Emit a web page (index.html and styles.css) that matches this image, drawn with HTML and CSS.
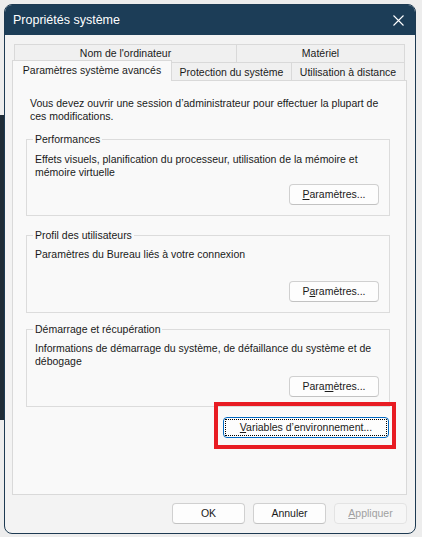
FILE: index.html
```html
<!DOCTYPE html>
<html lang="fr">
<head>
<meta charset="utf-8">
<title>Propriétés système</title>
<link rel="stylesheet" href="styles.css">
</head>
<body>
<div class="window">
  <div class="titlebar">
    <span class="title">Propriétés système</span>
    <svg class="close" width="11" height="11" viewBox="0 0 11 11"><path d="M0.5 0.5 L10.5 10.5 M10.5 0.5 L0.5 10.5" stroke="#ffffff" stroke-width="1.1" fill="none"/></svg>
  </div>
  <div class="body">
    <div class="tabs">
      <div class="tabrow back">
        <div class="tab t-nom">Nom de l'ordinateur</div>
        <div class="tab t-mat">Matériel</div>
      </div>
      <div class="tabrow front">
        <div class="tab selected">Paramètres système avancés</div>
        <div class="tab t-prot">Protection du système</div>
        <div class="tab t-util">Utilisation à distance</div>
      </div>
    </div>
    <div class="panel">
      <p class="intro">Vous devez ouvrir une session d’administrateur pour effectuer la plupart de<br>ces modifications.</p>
      <fieldset class="group g1">
        <legend>Performances</legend>
        <p class="desc">Effets visuels, planification du processeur, utilisation de la mémoire et<br>mémoire virtuelle</p>
        <div class="actions"><button class="btn"><u>P</u>aramètres...</button></div>
      </fieldset>
      <fieldset class="group g2">
        <legend>Profil des utilisateurs</legend>
        <p class="desc">Paramètres du Bureau liés à votre connexion</p>
        <div class="actions"><button class="btn">P<u>a</u>ramètres...</button></div>
      </fieldset>
      <fieldset class="group g3">
        <legend>Démarrage et récupération</legend>
        <p class="desc">Informations de démarrage du système, de défaillance du système et de<br>débogage</p>
        <div class="actions"><button class="btn">Para<u>m</u>ètres...</button></div>
      </fieldset>
      <div class="env-row">
        <div class="env-wrap">
          <button class="btn env"><span class="focus-ring"><u>V</u>ariables d’environnement...</span></button>
          <span class="highlight"></span>
        </div>
      </div>
    </div>
    <div class="footer">
      <button class="btn dlg">OK</button>
      <button class="btn dlg">Annuler</button>
      <button class="btn dlg disabled"><u>A</u>ppliquer</button>
    </div>
  </div>
</div>
</body>
</html>
```
FILE: styles.css
```css
html, body {
  margin: 0;
  padding: 0;
}
body {
  width: 422px;
  height: 537px;
  overflow: hidden;
  font-family: "Liberation Sans", Arial, sans-serif;
  font-size: 10.5px;
  line-height: 13px;
  color: #1a1a1a;
  background:
    linear-gradient(#1f2c37, #1f2c37) 0 115px / 4px 305px no-repeat,
    #ededed;
  padding: 4px 0 0 4px;
  box-sizing: border-box;
}
.window {
  width: 412px;
  height: 530px;
  box-sizing: border-box;
  border: 1px solid #1d3a52;
  border-radius: 8px;
  background: #f3f3f3;
  overflow: hidden;
  display: flex;
  flex-direction: column;
}
.titlebar {
  height: 30px;
  background: #1c3d57;
  color: #ffffff;
  display: flex;
  align-items: center;
  justify-content: space-between;
  padding: 0 11px 0 8px;
  font-size: 12.5px;
  flex: none;
}
.close {
  display: block;
}
.body {
  padding: 9px 8px 0 7px;
  display: flex;
  flex-direction: column;
}
.tabs {
  display: flex;
  flex-direction: column;
}
.tabrow {
  display: flex;
}
.tabrow.back {
  margin: 0 2px;
  height: 18px;
}
.tabrow.front {
  height: 18px;
  align-items: flex-start;
}
.tab {
  box-sizing: border-box;
  border: 1px solid #d9d9d9;
  border-bottom: none;
  background: #f0f0f0;
  text-align: center;
  height: 18px;
  line-height: 16px;
  white-space: nowrap;
  color: #1a1a1a;
}
.t-nom { width: 223px; }
.t-mat { width: 169px; margin-left: -1px; }
.tab.selected {
  width: 160px;
  height: 21px;
  margin-top: -2px;
  background: #f9f9f9;
  position: relative;
  z-index: 1;
  line-height: 18px;
}
.t-prot { width: 121px; margin-left: -1px; line-height: 18px; }
.t-util { width: 114px; margin-left: -1px; line-height: 18px; }

.panel {
  box-sizing: border-box;
  height: 415px;
  border: 1px solid #d9d9d9;
  background: #f9f9f9;
  padding: 16px 16px 0 13px;
  display: flex;
  flex-direction: column;
}
.intro {
  margin: 0 0 10px 4px;
  white-space: nowrap;
}
.group {
  margin: 0;
  border: 1px solid #dcdcdc;
  padding: 0 10px 10px 8px;
  min-width: 0;
}
.group legend {
  padding: 0 2px;
  margin-left: -2px;
  line-height: 13px;
}
.desc {
  margin: 7px 0 0 0;
  height: 26px;
  white-space: nowrap;
}
.actions {
  display: flex;
  justify-content: flex-end;
  margin-top: 5px;
}
.g2 { margin-top: 13px; }
.g2 .desc { margin-top: 6px; }
.g2 .actions { margin-top: 7px; }
.g3 { margin-top: 10px; padding-bottom: 9px; }
.g3 .desc { margin-top: 6px; }
.g3 .actions { margin-top: 8px; }

.btn {
  font-family: inherit;
  font-size: 10.5px;
  color: #1a1a1a;
  background: #fdfdfd;
  border: 1px solid #d0d0d0;
  border-bottom-color: #c2c2c2;
  border-radius: 4px;
  width: 90px;
  height: 21px;
  padding: 0;
  box-sizing: border-box;
  line-height: 19px;
}
.btn u {
  text-underline-offset: 1px;
}
.env-row {
  display: flex;
  justify-content: flex-end;
  margin-top: 10px;
  padding-right: 1px;
}
.env-wrap {
  position: relative;
}
.btn.env {
  width: 166px;
  height: 21px;
  border: 1px solid #0067c0;
  padding: 1px;
  display: block;
}
.focus-ring {
  display: block;
  height: 100%;
  box-sizing: border-box;
  border: 1px dotted #000000;
  line-height: 15px;
}
.highlight {
  position: absolute;
  left: -9px;
  top: -15px;
  right: -7px;
  bottom: -11px;
  border: 4px solid #e81c23;
  pointer-events: none;
}
.footer {
  display: flex;
  justify-content: flex-end;
  gap: 8px;
  margin-top: 8px;
}
.btn.dlg {
  width: 73px;
}
.btn.disabled {
  color: #a0a0a0;
  background: #f6f6f6;
  border-color: #e3e3e3;
}
```
